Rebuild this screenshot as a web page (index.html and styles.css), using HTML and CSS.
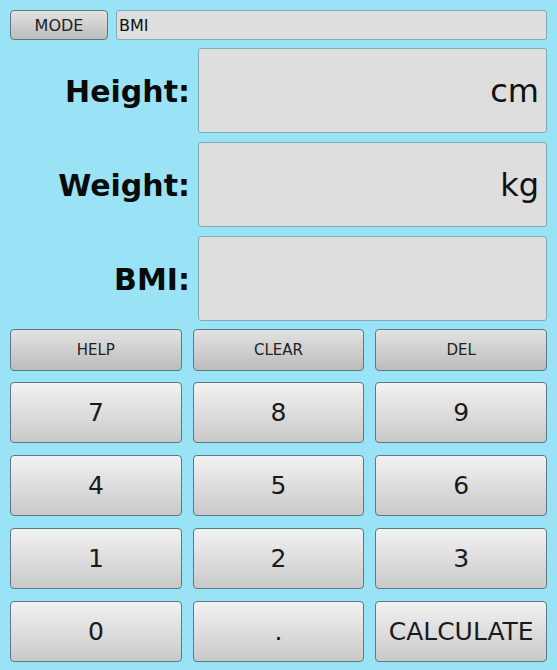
FILE: index.html
```html
<!DOCTYPE html>
<html>
<head>
<meta charset="utf-8">
<link rel="stylesheet" href="styles.css">
</head>
<body>
<div class="app">
  <div class="topbar">
    <button class="btn small mode">MODE</button>
    <div class="field mode-field">BMI</div>
  </div>
  <div class="form">
    <div class="label">Height:</div>
    <div class="field big">cm</div>
    <div class="label">Weight:</div>
    <div class="field big">kg</div>
    <div class="label">BMI:</div>
    <div class="field big"></div>
  </div>
  <div class="tools">
    <button class="btn small">HELP</button>
    <button class="btn small">CLEAR</button>
    <button class="btn small">DEL</button>
  </div>
  <div class="keys">
    <button class="btn key">7</button>
    <button class="btn key">8</button>
    <button class="btn key">9</button>
    <button class="btn key">4</button>
    <button class="btn key">5</button>
    <button class="btn key">6</button>
    <button class="btn key">1</button>
    <button class="btn key">2</button>
    <button class="btn key">3</button>
    <button class="btn key">0</button>
    <button class="btn key">.</button>
    <button class="btn key">CALCULATE</button>
  </div>
</div>
</body>
</html>
```

FILE: styles.css
```css
html, body {
  margin: 0;
  padding: 0;
  background: #9ae2f6;
}
body {
  font-family: "DejaVu Sans", sans-serif;
  color: #1e1e1e;
}
.app {
  width: 557px;
  height: 670px;
  box-sizing: border-box;
  padding: 10px;
  display: flex;
  flex-direction: column;
}
.topbar {
  display: flex;
  gap: 8px;
  height: 30px;
}
.btn {
  font-family: "DejaVu Sans", sans-serif;
  color: #222;
  border: 1px solid #5a7983;
  border-radius: 4px;
  background: linear-gradient(#f2f2f2, #c9c9c9);
  box-sizing: border-box;
  margin: 0;
  padding: 0;
  display: flex;
  align-items: center;
  justify-content: center;
}
.btn.small {
  font-size: 15px;
  background: linear-gradient(#e2e2e2, #bcbcbc);
}
.btn.small.mode {
  width: 98px;
  height: 30px;
  font-size: 16px;
}
.field {
  background: #dedede;
  border: 1px solid #7faab6;
  border-radius: 3px;
  box-sizing: border-box;
}
.mode-field {
  flex: 1;
  height: 30px;
  font-size: 16px;
  display: flex;
  align-items: center;
  padding-left: 2px;
  color: #111;
}
.form {
  margin-top: 8px;
  display: grid;
  grid-template-columns: 180px 1fr;
  column-gap: 8px;
  row-gap: 9px;
  grid-auto-rows: 85px;
}
.label {
  font-weight: bold;
  font-size: 30px;
  color: #0a0a0a;
  display: flex;
  align-items: center;
  justify-content: flex-end;
  padding-top: 2px;
}
.field.big {
  font-size: 32px;
  display: flex;
  align-items: center;
  justify-content: flex-end;
  padding-right: 7px;
  color: #111;
}
.tools {
  margin-top: 8px;
  display: grid;
  grid-template-columns: 1fr 1fr 1fr;
  column-gap: 11px;
  height: 42px;
}
.tools .btn {
  height: 42px;
}
.keys {
  margin-top: 11px;
  display: grid;
  grid-template-columns: 1fr 1fr 1fr;
  column-gap: 11px;
  row-gap: 12px;
  grid-auto-rows: 61px;
}
.btn.key {
  font-size: 25px;
  color: #1a1a1a;
}
```
